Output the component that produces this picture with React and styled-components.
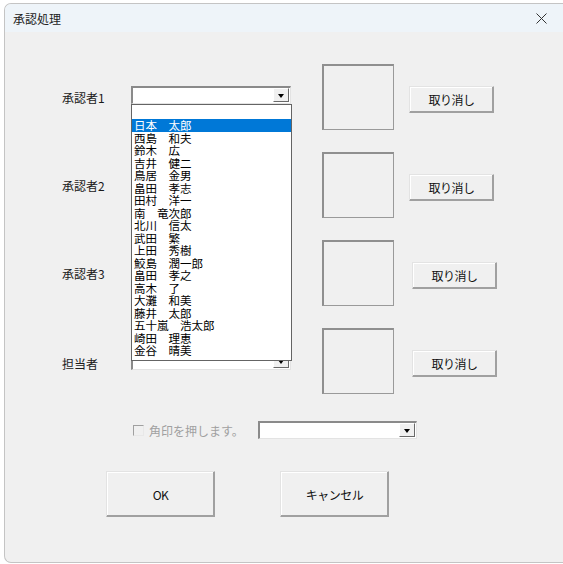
import React from 'react';
import styled, { createGlobalStyle } from 'styled-components';

const GlobalStyle = createGlobalStyle`
  html, body {
    margin: 0;
    padding: 0;
    background: #ffffff;
    overflow: hidden;
  }
  body {
    font-family: "Noto Sans CJK JP", "Noto Sans", sans-serif;
    color: #1a1a1a;
  }
`;

const names = [
  '日本　太郎',
  '西島　和夫',
  '鈴木　広',
  '吉井　健二',
  '鳥居　金男',
  '畠田　孝志',
  '田村　洋一',
  '南　竜次郎',
  '北川　信太',
  '武田　繁',
  '上田　秀樹',
  '鮫島　潤一郎',
  '畠田　孝之',
  '高木　了',
  '大灘　和美',
  '藤井　太郎',
  '五十嵐　浩太郎',
  '崎田　理恵',
  '金谷　晴美',
];

const rows = ['承認者1', '承認者2', '承認者3', '担当者'];

const Window = styled.div`
  margin: 3px 0 0 4px;
  width: 563px;
  height: 558px;
  background: #f0f0f0;
  border: 1px solid #c4c4c4;
  border-right: none;
  border-radius: 7px 0 0 7px;
  overflow: hidden;
  display: flex;
  flex-direction: column;
`;

const TitleBar = styled.div`
  height: 28px;
  flex-shrink: 0;
  background: #eef4f9;
  display: flex;
  align-items: center;
  justify-content: space-between;
  padding: 0 21px 0 8px;
  font-size: 12px;
  color: #222;
`;

const Close = styled.svg`
  width: 11px;
  height: 11px;
`;

const Body = styled.div`
  padding: 32px 0 0 57px;
  display: flex;
  flex-direction: column;
`;

const Rows = styled.div`
  display: flex;
  flex-direction: column;
  gap: 22px;
`;

const Row = styled.div`
  display: flex;
  align-items: center;
  height: 66px;
`;

const Label = styled.div`
  width: 69px;
  font-size: 12px;
  margin-top: ${(p) => (p.$last ? '4px' : '0')};
`;

const ComboWrap = styled.div`
  position: relative;
  width: ${(p) => p.$w || 160}px;
  height: 18px;
  margin-bottom: ${(p) => p.$up || 0}px;
`;

const ComboBox = styled.div`
  box-sizing: border-box;
  width: 100%;
  height: 100%;
  background: #fff;
  border-top: 2px solid #8a8a8a;
  border-left: 2px solid #8a8a8a;
  border-right: 1px solid #e3e3e3;
  border-bottom: 1px solid #e3e3e3;
  display: flex;
  justify-content: flex-end;
  align-items: stretch;
  padding: 0 1px 1px 0;
`;

const ArrowBtn = styled.div`
  box-sizing: border-box;
  width: 16px;
  background: #f0f0f0;
  border-top: 1px solid #fff;
  border-left: 1px solid #fff;
  border-right: 1px solid #696969;
  border-bottom: 1px solid #696969;
  display: flex;
  align-items: center;
  justify-content: center;
  &::after {
    content: '';
    border-left: 3.5px solid transparent;
    border-right: 3.5px solid transparent;
    border-top: 4px solid #000;
    margin-top: 1px;
  }
`;

const ListBox = styled.div`
  position: absolute;
  z-index: 10;
  top: 100%;
  left: 0;
  width: 161px;
  box-sizing: border-box;
  background: #fff;
  border: 1px solid #646464;
  padding-bottom: 3px;
  font-size: 11.5px;
`;

const Item = styled.div`
  height: ${(p) => (p.$blank ? 14 : 12.5)}px;
  line-height: 12.5px;
  padding-left: 2px;
  white-space: pre;
  color: ${(p) => (p.$sel ? '#fff' : '#000')};
  background: ${(p) => (p.$sel ? '#0078d7' : 'transparent')};
`;

const StampBox = styled.div`
  box-sizing: border-box;
  width: 72px;
  height: 66px;
  margin-left: 31px;
  border-top: 2px solid #8f8f8f;
  border-left: 2px solid #8f8f8f;
  border-right: 1px solid #9a9a9a;
  border-bottom: 1px solid #9a9a9a;
`;

const Button = styled.button`
  box-sizing: border-box;
  width: ${(p) => p.$w}px;
  height: ${(p) => p.$h}px;
  margin-left: ${(p) => p.$ml || 0}px;
  margin-top: ${(p) => p.$mt || 0}px;
  padding: 0;
  background: #f0f0f0;
  border-top: 1px solid #e3e3e3;
  border-left: 1px solid #e3e3e3;
  border-right: 1px solid #a0a0a0;
  border-bottom: 1px solid #a0a0a0;
  box-shadow: inset -1px -1px 0 #a0a0a0, inset 1px 1px 0 #fff;
  font-family: "Noto Sans CJK JP", "Noto Sans", sans-serif;
  font-size: 12px;
  color: #111;
  letter-spacing: -0.5px;
`;

const CheckRow = styled.div`
  display: flex;
  align-items: center;
  margin-top: 27px;
  padding-left: 71px;
  height: 18px;
`;

const CheckArea = styled.div`
  width: 125px;
  display: flex;
  align-items: center;
  gap: 5px;
  color: #a0a0a0;
  font-size: 12px;
`;

const CheckBox = styled.span`
  box-sizing: border-box;
  width: 11px;
  height: 11px;
  border-top: 1px solid #a0a0a0;
  border-left: 1px solid #a0a0a0;
  border-right: 1px solid #e8e8e8;
  border-bottom: 1px solid #e8e8e8;
`;

const ButtonRow = styled.div`
  display: flex;
  margin-top: 32px;
  padding-left: 44px;
  gap: 65px;
`;

const Combo = ({ children, ...rest }) => (
  <ComboWrap {...rest}>
    <ComboBox>
      <ArrowBtn />
    </ComboBox>
    {children}
  </ComboWrap>
);

const App = () => (
  <>
    <GlobalStyle />
    <Window>
      <TitleBar>
        <span>承認処理</span>
        <Close viewBox="0 0 11 11">
          <path d="M0.5 0.5 L10.5 10.5 M10.5 0.5 L0.5 10.5" stroke="#333" strokeWidth="1" fill="none" />
        </Close>
      </TitleBar>
      <Body>
        <Rows>
          {rows.map((r, i) => (
            <Row key={r}>
              <Label $last={i === 3}>{r}</Label>
              <Combo $up={i === 0 ? 4 : 0}>
                {i === 0 && (
                  <ListBox>
                    <Item $blank />
                    {names.map((n, j) => (
                      <Item key={n + j} $sel={j === 0}>
                        {n}
                      </Item>
                    ))}
                  </ListBox>
                )}
              </Combo>
              <StampBox />
              <Button $w={85} $h={27} $ml={i < 2 ? 15 : 18} $mt={5}>
                取り消し
              </Button>
            </Row>
          ))}
        </Rows>
        <CheckRow>
          <CheckArea>
            <CheckBox />
            <span>角印を押します。</span>
          </CheckArea>
          <Combo $w={159} />
        </CheckRow>
        <ButtonRow>
          <Button $w={109} $h={46}>OK</Button>
          <Button $w={109} $h={46}>キャンセル</Button>
        </ButtonRow>
      </Body>
    </Window>
  </>
);

export default App;
